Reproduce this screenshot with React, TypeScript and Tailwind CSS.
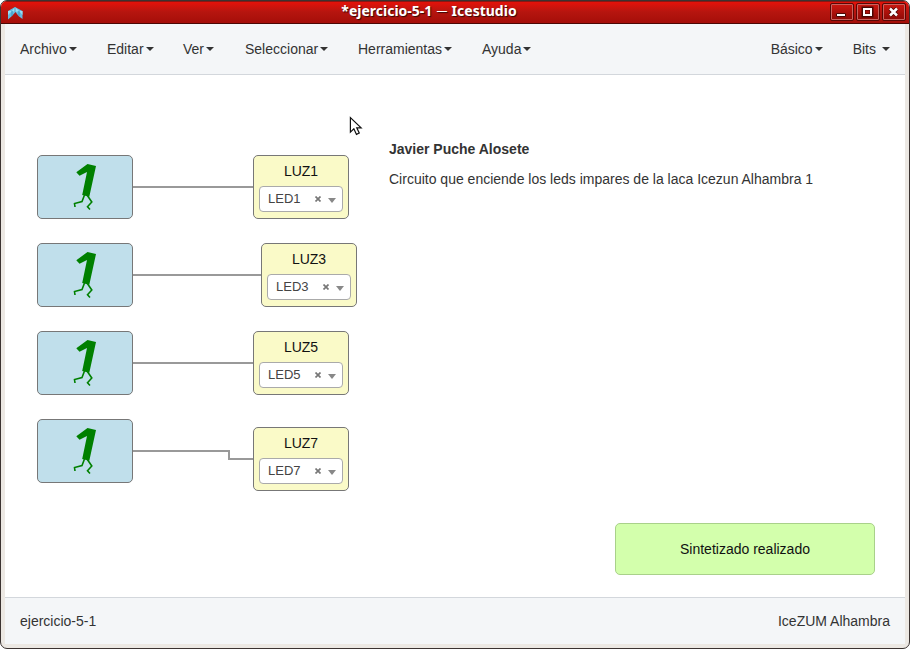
import type { ReactNode } from "react";

const menus = [
  { label: "Archivo", width: "w-[87px]" },
  { label: "Editar", width: "w-[76px]" },
  { label: "Ver", width: "w-[62px]" },
  { label: "Seleccionar", width: "w-[113px]" },
  { label: "Herramientas", width: "w-[124px]" },
  { label: "Ayuda", width: "w-[60px]" },
];

const constants = ["top-[80px]", "top-[168px]", "top-[256px]", "top-[344px]"];

const outputs = [
  { name: "LUZ1", pin: "LED1", place: "left-[248px] top-[80px]" },
  { name: "LUZ3", pin: "LED3", place: "left-[256px] top-[168px]" },
  { name: "LUZ5", pin: "LED5", place: "left-[248px] top-[256px]" },
  { name: "LUZ7", pin: "LED7", place: "left-[248px] top-[352px]" },
];

function Caret() {
  return (
    <svg className="shrink-0" width="8" height="4" viewBox="0 0 8 4">
      <path d="M0 0H8L4 4Z" fill="#333" />
    </svg>
  );
}

function WindowButton({ children }: { children: ReactNode }) {
  return (
    <div className="h-[18px] w-[24px] rounded-[2px] border border-[#590806] bg-[#a8100b]">
      <div className="h-full w-full rounded-[1px] border border-[#c9635e] bg-linear-to-b from-[#c91710] to-[#910b07]">
        <svg width="20" height="14" viewBox="0 0 20 14">{children}</svg>
      </div>
    </div>
  );
}

function TitleBar() {
  return (
    <header className="flex h-[23px] shrink-0 items-center border-b border-[#4b0805] bg-linear-to-b from-[#e91108] via-[#b5150f] via-50% to-[#a50e09] shadow-[inset_0_1px_0_#8a1713]">
      <div className="w-[84px] pt-[2px] pl-[7px]">
        <svg width="15" height="13" viewBox="0 0 15 13">
          <path d="M0 4L7 0L14.5 4V12L10.5 9L7.5 5L4 9L0 12.5Z" fill="#65bbe1" />
          <path d="M7 0L4 4L7.5 5L11 4ZM0 4L4 4L0 8ZM14.5 4L11 4L14.5 8Z" fill="#98def3" />
          <path d="M4 4V9M11 4V9M7 0V5" stroke="#2d84b0" strokeWidth=".7" />
        </svg>
      </div>
      <h1 className="flex-1 pr-[57px] pb-[2px] text-center font-['Noto_Sans',sans-serif] text-[14px] leading-[20px] font-bold whitespace-nowrap text-white [text-shadow:1px_1px_1px_#320605]">
        *ejercicio-5-1 <span className="inline-block w-[12px] text-center">─</span> Icestudio
      </h1>
      <div className="flex w-[79px] gap-[2px]">
        <WindowButton>
          <path d="M4.5 8.5H13.5V11.5H4.5Z" fill="#fff" stroke="#4a0805" />
        </WindowButton>
        <WindowButton>
          <path d="M5.5 3.5H13.5V10.5H5.5Z" fill="none" stroke="#4a0805" strokeWidth="4" />
          <path d="M6 4H13V10H6Z" fill="none" stroke="#fff" strokeWidth="2" />
        </WindowButton>
        <WindowButton>
          <path d="M6 3.5L13 10.5M13 3.5L6 10.5" stroke="#4a0805" strokeWidth="4" />
          <path d="M6 3.5L13 10.5M13 3.5L6 10.5" stroke="#fff" strokeWidth="2.5" />
        </WindowButton>
      </div>
    </header>
  );
}

function MenuBar() {
  return (
    <nav className="flex h-[51px] shrink-0 items-center border-b border-[#d3d7dc] bg-[#f4f6f8] px-[15px]">
      {menus.map((menu) => (
        <div key={menu.label} className={`flex shrink-0 items-center gap-[2px] ${menu.width}`}>
          <span>{menu.label}</span>
          <Caret />
        </div>
      ))}
      <div className="ml-auto flex items-center gap-[2px]">
        <span>Básico</span>
        <Caret />
      </div>
      <div className="ml-[30px] flex items-center gap-[6px]">
        <span>Bits</span>
        <Caret />
      </div>
    </nav>
  );
}

function ConstantBlock({ place }: { place: string }) {
  return (
    <div className={`absolute left-[32px] h-[64px] w-[96px] rounded-[5px] border border-[#777] bg-[#c0dfeb] ${place}`}>
      <svg width="94" height="62" viewBox="38 156 94 62">
        <path d="M76.3 172.2L87.5 164L96 166L89.3 196.8L82.2 195L87 172L79.5 175.7Z" fill="#008000" />
        <path d="M84.5 195L82 201.5L74.5 203.5L75 207M87 195L91.8 202L87.5 206.7L90 209.5" fill="none" stroke="#008000" strokeWidth="1.6" />
      </svg>
    </div>
  );
}

function OutputBlock({ name, pin, place }: { name: string; pin: string; place: string }) {
  return (
    <div className={`absolute h-[64px] w-[96px] rounded-[5px] border border-[#777] bg-[#fafac8] px-[5px] pt-[5px] ${place}`}>
      <div className="text-center text-[14px] leading-[20px] text-[#111]">{name}</div>
      <div className="mt-[5px] flex h-[26px] items-center rounded-[4px] border border-[#aaa] bg-white pl-[8px] text-[13px] leading-[24px] text-[#444]">
        <span className="w-[47px]">{pin}</span>
        <svg width="6" height="6" viewBox="0 0 6 6">
          <path d="M.5 .5L5.5 5.5M5.5 .5L.5 5.5" stroke="#777" strokeWidth="1.7" />
        </svg>
        <svg className="mt-[3px] ml-[7px]" width="8" height="5" viewBox="0 0 8 5">
          <path d="M0 0H8L4 5Z" fill="#888" />
        </svg>
      </div>
    </div>
  );
}

function Canvas() {
  return (
    <main className="relative flex-1 overflow-hidden bg-white">
      <svg className="absolute top-0 left-0" width="900" height="522" viewBox="5 75 900 522">
        <path d="M133 187H253M133 275H261M133 363H253M133 451H229V459H253" fill="none" stroke="#999" strokeWidth="2" />
      </svg>
      {constants.map((place) => (
        <ConstantBlock key={place} place={place} />
      ))}
      {outputs.map((output) => (
        <OutputBlock key={output.name} {...output} />
      ))}
      <article className="absolute top-[64px] left-[384px] leading-[20px] whitespace-nowrap">
        <p className="mb-[10px] font-bold">Javier Puche Alosete</p>
        <p>Circuito que enciende los leds impares de la laca Icezun Alhambra 1</p>
      </article>
      <div className="absolute top-[448px] left-[610px] flex h-[52px] w-[260px] items-center justify-center rounded-[5px] border border-[#a9d18a] bg-[#d3ffac] text-[#111]">
        Sintetizado realizado
      </div>
      <svg className="absolute top-[41px] left-[344px]" width="14" height="20" viewBox="0 0 15 21">
        <path d="M1.5 1.5V17L5.2 13.5L8 19.5L11 18L8.3 12.5H13Z" fill="#fff" stroke="#111" strokeWidth="1.3" />
      </svg>
    </main>
  );
}

export default function App() {
  return (
    <div className="h-[649px] w-[910px] bg-white">
      <div className="flex h-full flex-col overflow-hidden rounded-[7px] border border-[#3b3331] bg-[#ece8e3] font-['Liberation_Sans',Arial,sans-serif] text-[14px] text-[#333]">
        <TitleBar />
        <div className="mx-[4px] mb-[4px] flex min-h-0 flex-1 flex-col">
          <MenuBar />
          <Canvas />
          <footer className="flex h-[47px] shrink-0 items-center justify-between border-t border-[#d3d7dc] bg-[#f4f6f8] px-[15px]">
            <span>ejercicio-5-1</span>
            <span>IceZUM Alhambra</span>
          </footer>
        </div>
      </div>
    </div>
  );
}
